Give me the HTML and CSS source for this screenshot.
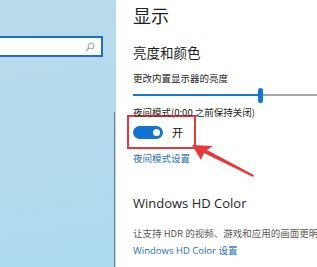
FILE: index.html
```html
<!DOCTYPE html>
<html lang="zh-CN">
<head>
<meta charset="utf-8">
<title>显示</title>
<link rel="stylesheet" href="styles.css">
</head>
<body>
<div class="window">
  <aside class="sidebar">
    <div class="side-main">
      <div class="search">
        <svg class="search-icon" width="10" height="10" viewBox="0 0 10 10">
          <circle cx="6" cy="4" r="3" fill="none" stroke="#a0a0a0" stroke-width="1"/>
          <path d="M3.9 6.1 L1 9" stroke="#a0a0a0" stroke-width="1.1"/>
        </svg>
      </div>
    </div>
    <div class="scrollbar"></div>
  </aside>
  <main class="content">
    <h1 class="title">显示</h1>
    <h2 class="subtitle">亮度和颜色</h2>
    <p class="label">更改内置显示器的亮度</p>
    <div class="slider">
      <div class="fill"></div>
      <div class="thumb"></div>
      <div class="rest"></div>
    </div>
    <p class="label night">夜间模式(0:00 之前保持关闭)</p>
    <div class="highlight">
      <span class="toggle"><span class="knob"></span></span>
      <span class="state">开</span>
    </div>
    <a class="link night-link">夜间模式设置</a>
    <h2 class="hd-title">Windows HD Color</h2>
    <p class="desc">让支持 HDR 的视频、游戏和应用的画面更明亮</p>
    <a class="link hd-link">Windows HD Color 设置</a>
    <svg class="arrow" width="80" height="45" viewBox="0 0 80 45">
      <polygon points="0,2 21,3 15,7 62,32 61,34 12,10 9,17" fill="#e8383a"/>
    </svg>
  </main>
</div>
</body>
</html>
```

FILE: styles.css
```css
html, body {
  margin: 0;
  padding: 0;
  background: #ffffff;
}
body {
  width: 317px;
  height: 267px;
  overflow: hidden;
  font-family: "Noto Sans CJK SC", "Noto Sans", sans-serif;
}
.window {
  display: flex;
  height: 267px;
  overflow: hidden;
}
.sidebar {
  width: 116px;
  flex: none;
  display: grid;
  grid-template-columns: 114px 2px;
  background: linear-gradient(170deg, #b9dcec 0%, #b3d9ea 50%, #addaee 100%);
}
.side-main {
  padding-top: 36px;
}
.search {
  width: 101px;
  height: 17px;
  border: 2px solid #1e6fc0;
  border-left: none;
  background: #ffffff;
  display: flex;
  justify-content: flex-end;
  align-items: center;
  box-sizing: content-box;
}
.search-icon {
  margin-right: 6px;
}
.scrollbar {
  margin-top: 112px;
  width: 1px;
  background: #7a8088;
}
.content {
  position: relative;
  flex: 1;
  min-width: 0;
  padding-left: 17px;
  color: #1e1e1e;
  overflow: hidden;
}
.title {
  margin: 4px 0 0 0;
  font-size: 18px;
  line-height: 22px;
  font-weight: 400;
}
.subtitle {
  margin: 18px 0 0 0;
  font-size: 13.5px;
  line-height: 16px;
  font-weight: 400;
}
.label {
  margin: 0;
  font-size: 9.5px;
  line-height: 12px;
  color: #222;
}
.subtitle + .label {
  margin-top: 12px;
}
.slider {
  margin-top: 3px;
  height: 16px;
  display: flex;
  align-items: center;
}
.fill {
  width: 125px;
  height: 2px;
  background: #1477d2;
}
.thumb {
  width: 5px;
  height: 15px;
  border-radius: 3px;
  background: #1477d2;
}
.rest {
  flex: 1;
  height: 2px;
  background: #a8a8a8;
}
.label.night {
  margin-top: 4px;
  line-height: 10px;
}
.highlight {
  margin: -2px 0 0 -6px;
  width: 61px;
  height: 30px;
  border: 2px solid #e23a3a;
  display: flex;
  align-items: center;
  gap: 9px;
  padding-left: 4px;
}
.toggle {
  width: 30px;
  height: 13px;
  border-radius: 7px;
  background: #1473cf;
  display: flex;
  align-items: center;
  justify-content: flex-end;
  padding-right: 3px;
  box-sizing: border-box;
}
.knob {
  width: 7px;
  height: 7px;
  border-radius: 50%;
  background: #ffffff;
}
.state {
  font-size: 11px;
  line-height: 13px;
  color: #111;
}
.link {
  display: block;
  font-size: 9.5px;
  line-height: 12px;
  color: #1f6fb6;
}
.night-link {
  margin-top: 3px;
}
.hd-title {
  margin: 30px 0 0 0;
  font-family: "Open Sans", "Noto Sans", sans-serif;
  font-size: 13px;
  line-height: 18px;
  font-weight: 400;
  color: #1e1e1e;
}
.desc {
  margin: 15px 0 0 0;
  font-size: 9.5px;
  line-height: 12px;
  color: #5a5a5a;
  white-space: nowrap;
  overflow: hidden;
}
.hd-link {
  margin-top: 6px;
  font-family: "Open Sans", "Noto Sans CJK SC", sans-serif;
}
.arrow {
  position: absolute;
  left: 76px;
  top: 143px;
}
```
